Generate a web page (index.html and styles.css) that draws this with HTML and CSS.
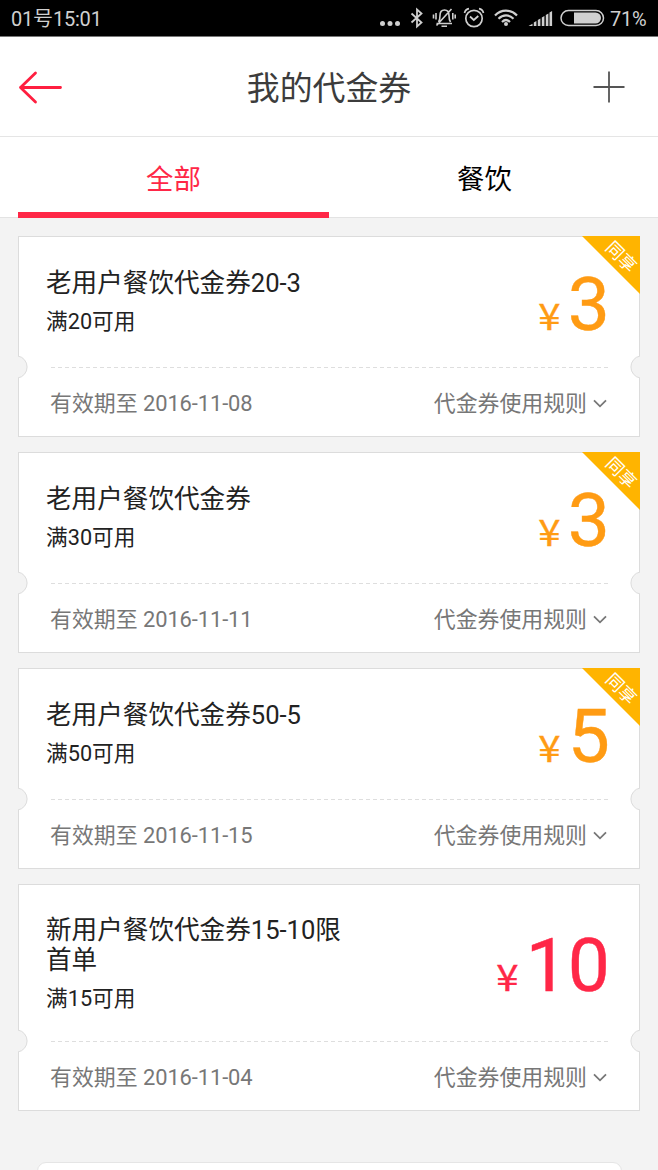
FILE: index.html
```html
<!DOCTYPE html>
<html lang="zh-CN">
<head>
<meta charset="utf-8">
<title>我的代金券</title>
<link rel="stylesheet" href="styles.css">
</head>
<body>
<div class="status">
  <span class="clock">01号15:01</span>
  <svg class="status-icons" width="226" height="36" viewBox="0 0 226 36" fill="none" stroke="#cfcfcf" stroke-width="1.5">
    <g fill="#cfcfcf" stroke="none"><circle cx="3.500" cy="23.500" r="2.500"/><circle cx="11" cy="23.500" r="2.500"/><circle cx="18.500" cy="23.500" r="2.500"/></g>
    <path d="M32.500 13.500l10 9-4.500 4V9.500l4.500 4-10 9" stroke-width="1.800"/>
    <path d="M57.500 23.500h15.500M59.500 22c1.500-2 1.500-4 1.500-6.500C61 12 62.500 10 65.500 10s4.500 2 4.500 5.500c0 2.500 0 4.500 1.500 6.500M62.500 26.300h5.500M72.500 9L57.500 25.500M57 13v6.500M54.500 14.500v4M73.800 13v6.500M76.200 14.500v4" stroke-width="1.600"/>
    <circle cx="95" cy="18.500" r="8.200" stroke-width="1.700"/><path d="M91 16.500l3.800 3.500 4.500-4M85.500 13c.5-2 2.500-4 4.500-4.300M104.500 13c-.5-2-2.500-4-4.500-4.300" stroke-width="1.700"/>
    <path d="M116 15.500c6-6.500 16-6.500 22 0M119.500 18.800c4.500-4.500 10.500-4.500 15 0M123 22c2.500-2.500 5.500-2.500 8 0" stroke-width="2.200"/><circle cx="127" cy="24" r="2" fill="#cfcfcf" stroke="none"/>
    <path d="M149.500 26l4-2.200V26zM154.800 26v-3.500l2.600-1.500V26zM158.800 26v-6l2.600-1.500V26zM162.800 26v-8.500l2.600-1.500V26zM166.800 26V15l2.600-1.500V26zM170.500 26V12.500l2.600-1.500v15z" fill="#cfcfcf" stroke="none"/>
    <rect x="182" y="10.500" width="42.500" height="15" rx="7.500"/><path d="M195 12.500h21.500a5.500 5.500 0 0 1 0 11h-21.500z" fill="#d0d0d0" stroke="none"/>
  </svg>
  <span class="percent">71%</span>
</div>
<header class="header">
  <svg class="back" width="44" height="34" viewBox="0 0 44 34" fill="none" stroke="#ff1f40" stroke-width="2.800" stroke-linecap="round" stroke-linejoin="round"><path d="M17.500 3L2.500 17.500l15 14.500M2.500 17.500h40"/></svg>
  <h1 class="heading">我的代金券</h1>
  <svg class="plus" width="32" height="32" viewBox="0 0 32 32" stroke="#555" stroke-width="1.800"><path d="M16 .5v31M.5 16h31"/></svg>
</header>
<nav class="tabs"><div class="tab tab-active">全部</div><div class="tab">餐饮</div></nav>
<main class="list">
  <section class="card">
    <div class="card-main"><div class="info"><h2 class="name">老用户餐饮代金券20-3</h2><p class="limit">满20可用</p></div><div class="price"><span class="yen">¥</span>3</div></div>
    <div class="divider"></div>
    <div class="card-foot"><span>有效期至 <span class="date">2016-11-08</span></span><span class="rules">代金券使用规则<svg class="chevron" width="14" height="9" viewBox="0 0 14 9"><path d="M1 1.300l6 6 6-6"/></svg></span></div>
    <svg class="notch notch-left" width="11" height="25" viewBox="0 0 11 25"><path d="M0 1A11.200 11.200 0 0 1 0 23"/></svg>
    <svg class="notch notch-right" width="11" height="25" viewBox="0 0 11 25"><path d="M0 1A11.200 11.200 0 0 1 0 23"/></svg>
    <div class="ribbon"><span class="ribbon-text">同享</span></div>
  </section>
  <section class="card">
    <div class="card-main"><div class="info"><h2 class="name">老用户餐饮代金券</h2><p class="limit">满30可用</p></div><div class="price"><span class="yen">¥</span>3</div></div>
    <div class="divider"></div>
    <div class="card-foot"><span>有效期至 <span class="date">2016-11-11</span></span><span class="rules">代金券使用规则<svg class="chevron" width="14" height="9" viewBox="0 0 14 9"><path d="M1 1.300l6 6 6-6"/></svg></span></div>
    <svg class="notch notch-left" width="11" height="25" viewBox="0 0 11 25"><path d="M0 1A11.200 11.200 0 0 1 0 23"/></svg>
    <svg class="notch notch-right" width="11" height="25" viewBox="0 0 11 25"><path d="M0 1A11.200 11.200 0 0 1 0 23"/></svg>
    <div class="ribbon"><span class="ribbon-text">同享</span></div>
  </section>
  <section class="card">
    <div class="card-main"><div class="info"><h2 class="name">老用户餐饮代金券50-5</h2><p class="limit">满50可用</p></div><div class="price"><span class="yen">¥</span>5</div></div>
    <div class="divider"></div>
    <div class="card-foot"><span>有效期至 <span class="date">2016-11-15</span></span><span class="rules">代金券使用规则<svg class="chevron" width="14" height="9" viewBox="0 0 14 9"><path d="M1 1.300l6 6 6-6"/></svg></span></div>
    <svg class="notch notch-left" width="11" height="25" viewBox="0 0 11 25"><path d="M0 1A11.200 11.200 0 0 1 0 23"/></svg>
    <svg class="notch notch-right" width="11" height="25" viewBox="0 0 11 25"><path d="M0 1A11.200 11.200 0 0 1 0 23"/></svg>
    <div class="ribbon"><span class="ribbon-text">同享</span></div>
  </section>
  <section class="card card-tall">
    <div class="card-main"><div class="info"><h2 class="name">新用户餐饮代金券15-10限首单</h2><p class="limit">满15可用</p></div><div class="price price-red"><span class="yen">¥</span>10</div></div>
    <div class="divider"></div>
    <div class="card-foot"><span>有效期至 <span class="date">2016-11-04</span></span><span class="rules">代金券使用规则<svg class="chevron" width="14" height="9" viewBox="0 0 14 9"><path d="M1 1.300l6 6 6-6"/></svg></span></div>
    <svg class="notch notch-left" width="11" height="25" viewBox="0 0 11 25"><path d="M0 1A11.200 11.200 0 0 1 0 23"/></svg>
    <svg class="notch notch-right" width="11" height="25" viewBox="0 0 11 25"><path d="M0 1A11.200 11.200 0 0 1 0 23"/></svg>
  </section>
  <div class="more"></div>
</main>
</body>
</html>
```
FILE: styles.css
```css
* { box-sizing: border-box; margin: 0; padding: 0; }
body {
  width: 658px;
  height: 1170px;
  overflow: hidden;
  display: flex;
  flex-direction: column;
  background: #f3f3f3;
  font-family: Roboto, "Noto Sans CJK SC", sans-serif;
  color: #222;
}
svg { display: block; flex: none; }
h1, h2 { font-weight: 400; }
.status {
  height: 37px;
  flex: none;
  display: flex;
  align-items: center;
  padding: 0 0 0 11px;
  background: #000;
  border-bottom: 1px solid #777;
  color: #d0d0d0;
  font-size: 20px;
  line-height: 36px;
  white-space: nowrap;
}
.clock { width: 368px; letter-spacing: -0.2px; padding-top: 1px; }
.percent { padding: 1px 0 0 5px; letter-spacing: -0.3px; }
.header {
  height: 100px;
  flex: none;
  display: flex;
  justify-content: space-between;
  align-items: center;
  padding: 0 33px 0 18px;
  background: #fff;
  border-bottom: 1px solid #e5e5e5;
}
.heading { font-size: 32.9px; line-height: 48px; color: #3c3c3c; padding: 4px 0 0 3px; }
.tabs {
  height: 81px;
  flex: none;
  display: grid;
  grid-template-columns: 311px 311px;
  padding: 0 18px;
  background: #fff;
  border-bottom: 1px solid #e3e3e3;
}
.tab { height: 80px; text-align: center; font-size: 27.4px; line-height: 86px; color: #000; }
.tab-active { height: 81px; color: #ff2747; border-bottom: 6px solid #ff2747; }
.list {
  flex: 1;
  display: flex;
  flex-direction: column;
  gap: 15px;
  padding: 18px 18px 0;
}
.card {
  position: relative;
  flex: none;
  height: 201px;
  display: flex;
  flex-direction: column;
  background: #fff;
  border: 1px solid #dcdcdc;
}
.card-tall { height: 227px; }
.card-main {
  flex: 1;
  display: flex;
  justify-content: space-between;
  align-items: center;
  padding: 0 29px 0 27px;
}
.info { width: 310px; align-self: flex-start; padding-top: 31px; }
.card-tall .info { padding-top: 30px; }
.name { font-size: 25.6px; line-height: 30px; color: #222; }
.limit { margin-top: 8px; font-size: 21.7px; line-height: 32px; color: #222; }
.price {
  display: flex;
  align-items: baseline;
  font-size: 75px;
  line-height: 88px;
  color: #ff9b13;
  padding-top: 4px;
  -webkit-text-stroke: 0.4px currentColor;
}
.price-red { color: #ff2747; padding-top: 3px; }
.yen {
  width: 37px;
  text-align: center;
  font-family: "Noto Sans CJK SC", sans-serif;
  font-size: 36.5px;
  line-height: 40px;
  transform: scaleX(1.1);
}
.divider {
  height: 1px;
  margin: 0 31px 0 32px;
  background: repeating-linear-gradient(90deg, #dedede 0 4px, #fff 4px 7px);
}
.card-foot {
  height: 68px;
  display: flex;
  justify-content: space-between;
  align-items: center;
  padding: 4px 32px 0 31px;
  font-size: 21.9px;
  line-height: 32px;
  color: #777;
}
.date { letter-spacing: -0.1px; }
.rules { display: flex; align-items: center; gap: 6px; }
.chevron { fill: none; stroke: #777; stroke-width: 1.8; margin-bottom: 2px; }
.notch { position: absolute; bottom: 56px; fill: #f3f3f3; stroke: #dcdcdc; }
.notch-left { left: -1px; }
.notch-right { right: -1px; transform: scaleX(-1); }
.ribbon {
  position: absolute;
  top: -1px;
  right: -1px;
  width: 58px;
  height: 58px;
  background: #ffb400;
  clip-path: polygon(0 0, 100% 0, 100% 100%);
}
.ribbon-text {
  position: absolute;
  left: 18.5px;
  top: 8.5px;
  width: 40px;
  text-align: center;
  font-size: 17.5px;
  line-height: 24px;
  color: #fff;
  transform: rotate(45deg);
}
.more {
  height: 60px;
  margin: 36px 18px 0 19px;
  background: #fff;
  border: 1px solid #e5e5e5;
  border-radius: 9px;
}
```
